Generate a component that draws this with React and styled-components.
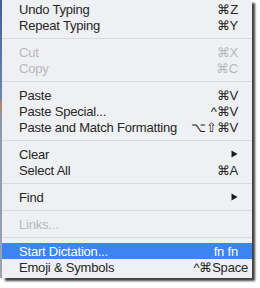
import styled, { createGlobalStyle } from 'styled-components';

const GlobalStyle = createGlobalStyle`
html, body {
  margin: 0;
  padding: 0;
  background: #ffffff;
}
`;

const items = [
    { label: 'Undo Typing', key: '⌘Z' },
    { label: 'Repeat Typing', key: '⌘Y' },
    { sep: true },
    { label: 'Cut', key: '⌘X', disabled: true },
    { label: 'Copy', key: '⌘C', disabled: true },
    { sep: true },
    { label: 'Paste', key: '⌘V' },
    { label: 'Paste Special...', key: '^⌘V' },
    { label: 'Paste and Match Formatting', key: '⌥⇧⌘V' },
    { sep: true },
    { label: 'Clear', submenu: true },
    { label: 'Select All', key: '⌘A' },
    { sep: true },
    { label: 'Find', submenu: true },
    { sep: true },
    { label: 'Links...', disabled: true },
    { sep: true },
    { label: 'Start Dictation...', key: 'fn fn', active: true },
    { label: 'Emoji & Symbols', key: '^⌘Space', wide: true },
];

const Arrow = () => (
    <svg width="7" height="8" viewBox="0 0 7 8">
        <path d="M0.5 0.5 L6.5 4 L0.5 7.5 Z" fill="currentColor" />
    </svg>
);

const App = () => {
    return (
        <>
            <GlobalStyle />
            <Stage>
                <Desktop />
                <Menu>
                    {items.map((item, i) =>
                        item.sep ? (
                            <Separator key={i} />
                        ) : (
                            <Item key={i} $disabled={item.disabled} $active={item.active}>
                                <Label>{item.label}</Label>
                                {item.key && <Shortcut $wide={item.wide}>{item.key}</Shortcut>}
                                {item.submenu && <ArrowBox><Arrow /></ArrowBox>}
                            </Item>
                        )
                    )}
                </Menu>
            </Stage>
        </>
    );
};

const Stage = styled.div`
display: flex;
align-items: flex-start;
width: 260px;
height: 288px;
background: #ffffff;
`;

const Desktop = styled.div`
width: 2px;
height: 278px;
background: linear-gradient(180deg, #3f5f96 0%, #6f87ad 35%, #b08a5a 38%, #8a97ad 42%, #9aa3b3 100%);
`;

const Menu = styled.div`
width: 250px;
height: 278px;
box-sizing: border-box;
padding: 1px 0 3px;
background: #eff0f3;
box-shadow: 3px 3px 2px rgba(0, 0, 0, 0.75);
display: flex;
flex-direction: column;
font-family: 'Liberation Sans', Arial, sans-serif;
font-size: 13px;
letter-spacing: -0.2px;
`;

const Item = styled.div`
display: flex;
align-items: center;
height: 16px;
padding: 0 14px 0 17px;
background: ${(p) => (p.$active ? '#3a84f3' : 'transparent')};
color: ${(p) => (p.$active ? '#ffffff' : p.$disabled ? '#b6b7ba' : '#262626')};
`;

const Label = styled.span`
flex: 1;
white-space: nowrap;
`;

const Shortcut = styled.span`
white-space: nowrap;
margin-right: ${(p) => (p.$wide ? '-10px' : '0')};
`;

const ArrowBox = styled.span`
display: flex;
align-items: center;
color: #1a1a1a;
`;

const Separator = styled.div`
height: 1px;
margin: 5px 0;
background: #d9dadd;
`;

export default App;
